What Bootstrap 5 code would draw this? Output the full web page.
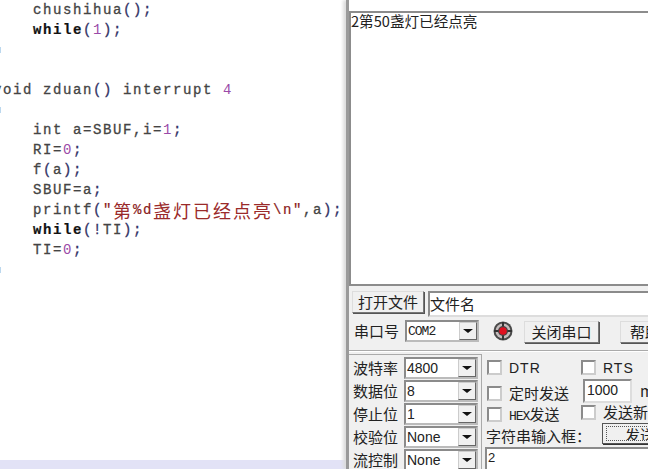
<!DOCTYPE html>
<html lang="zh">
<head>
<meta charset="utf-8">
<title>串口调试</title>
<link href="https://cdn.jsdelivr.net/npm/bootstrap@5.3.0/dist/css/bootstrap.min.css" rel="stylesheet">
<style>
html,body{margin:0;height:469px;width:648px;overflow:hidden;background:#fff}
.shot{width:648px;height:469px;overflow:hidden;font-family:"Noto Sans CJK SC","Liberation Sans",sans-serif;color:#222}
.editor{width:346px;flex:none;overflow:hidden}
.code{flex:1;font:14px/20px "Liberation Mono",monospace;letter-spacing:1.6px;color:#444;-webkit-text-stroke:.3px #444;white-space:pre;margin:0 0 0 -7px}
.code b{color:#111;-webkit-text-stroke:.2px #111}
.code .pn{color:#336;-webkit-text-stroke:.3px #336}
.code .nm{color:#9a4aa8;-webkit-text-stroke:0}
.code .st{color:#8a2020;-webkit-text-stroke:.2px #8a2020}
.code .cj{font:18px/20px "Noto Sans CJK SC",sans-serif;letter-spacing:2px;color:#9a2a2a;-webkit-text-stroke:0;vertical-align:top}
.mk{display:inline-block;width:1px;height:6px;background:#bcd8ee;margin-left:7px;vertical-align:middle}
.strip{height:9px;background:#e2e2f6;flex:none}
.tool{width:302px;flex:none;background:#f0f0f0;border-left:3px solid #9a9a9a;box-shadow:-3px 0 3px #ddd;position:relative}
.topgap{height:11px;background:#fff;flex:none}
.output{height:275px;flex:none;background:#fff;border:2px solid #8c8c8c;border-right:0;font-size:14.6px;line-height:15px;color:#222;white-space:nowrap}
.bar{font-size:15px;line-height:20px;white-space:nowrap}
.w95btn{background:#f0f0f0;border:1px solid #777;border-top-color:#ddd;border-left-color:#ddd;box-shadow:1px 1px 0 #555;display:flex;align-items:center;justify-content:center;flex:none}
.fileline{height:35px;padding:5px 0 0 3px;gap:4px}
.fileline .w95btn{width:72px;height:22px}
.sunk{background:#fff;border:2px solid #8b8b8b;border-right-color:#ddd;border-bottom-color:#ddd;flex:none}
.fname{flex:1;height:26px;margin-right:-4px;line-height:21px}
.portline{height:27px;padding:0 0 5px 5px;margin-top:-1px}
.lbl{width:44px;flex:none}
.combo{width:74px;height:22px;display:flex;align-items:center;font:14px/18px "Liberation Sans",sans-serif;padding-left:1px;margin-left:7px;background:#fff;border:2px solid #8b8b8b;border-right-color:#bbb;border-bottom-color:#bbb;flex:none;position:relative}
.combo i{position:absolute;right:0;top:0;bottom:0;width:18px;background:#f0f0f0;border:1px solid #ccc;border-right-color:#666;border-bottom-color:#666;display:flex;align-items:center;justify-content:center}
.combo i::after{content:"";border:5px solid transparent;border-top:4px solid #111;border-bottom:0}
.narrow{font:13px "Liberation Mono",monospace;letter-spacing:-1px}
.led{width:20px;height:20px;margin-left:14px;flex:none}
.closebtn{width:75px;height:22px;margin-left:11px;margin-top:1px}
.helpbtn{width:60px;height:22px;margin-left:21px;margin-top:1px;justify-content:flex-start;padding-left:9px}
.rule{height:2px;background:#aaa;border-bottom:1px solid #fff;margin-top:3px;flex:none}
.lower{flex:1;min-height:0}
.params{width:133px;flex:none;border:1px solid #aaa;border-bottom:0;border-left:0;padding:1px 0 0 4px;margin-top:2px}
.prow{height:23px}
.sends{flex:1;padding:4px 0 0 4px;min-width:0}
.srow{height:23px;font-size:15px}
.short{height:22px}
.chk{width:15px;height:15px;background:#fff;border:2px solid #8b8b8b;border-right-color:#ccc;border-bottom-color:#ccc;flex:none}
.c1{width:95px;flex:none;padding-left:1px}
.c1 .chk{margin-right:7px}
.lat{font:14px "Liberation Sans",sans-serif;letter-spacing:1px}
.c2 .chk{margin-right:7px}
.down{margin-top:5px}
.downb{margin-top:1px}
.up{margin-top:-3px}
.num{width:49px;height:24px;font:14px/19px "Liberation Sans",sans-serif;padding-left:2px;margin:0 8px 0 2px}
.lbltxt{margin-top:0}
.sendbtn{width:60px;height:21px;margin:-5px 0 0 11px;justify-content:flex-start;padding-left:3px;font-size:15px;border-color:#555;box-shadow:1px 1px 0 #333}
.dots{border:1px dotted #555;padding:0 0 0 18px;line-height:15px;height:15px;width:100%;overflow:hidden}
.typed{height:24px;margin-left:-1px;font:13px/17px "Liberation Sans",sans-serif;padding-left:1px;width:170px}
</style>
</head>
<body>
<div class="shot d-flex">
  <div class="editor d-flex flex-column">
<div class="code">    chushihua<span class="pn">();</span>
    <b>while</b><span class="pn">(</span><span class="nm">1</span><span class="pn">);</span>
<span class="mk"></span>

void zduan<span class="pn">()</span> interrupt <span class="nm">4</span>
<span class="mk"></span>
    int a=SBUF,i=<span class="nm">1</span><span class="pn">;</span>
    RI=<span class="nm">0</span><span class="pn">;</span>
    f<span class="pn">(</span>a<span class="pn">);</span>
    SBUF=a<span class="pn">;</span>
    printf<span class="pn">(</span><span class="st">"<span class="cj">第</span>%d<span class="cj">盏灯已经点亮</span>\n"</span>,a<span class="pn">);</span>
    <b>while</b><span class="pn">(!</span>TI<span class="pn">);</span>
    TI=<span class="nm">0</span><span class="pn">;</span>
<span class="mk"></span></div>
    <div class="strip"></div>
  </div>
  <div class="tool d-flex flex-column">
    <div class="topgap"></div>
    <div class="output">2第50盏灯已经点亮</div>
    <div class="bar d-flex fileline">
      <div class="w95btn">打开文件</div>
      <div class="sunk fname">文件名</div>
    </div>
    <div class="bar d-flex align-items-center portline">
      <span class="lbl">串口号</span>
      <div class="combo"><span class="narrow">COM2</span><i></i></div>
      <svg class="led" viewBox="0 0 20 20"><circle cx="10" cy="10" r="9.5" fill="#4a4a4a"/><circle cx="10" cy="10" r="7.5" fill="#c4bcbc"/><path d="M10 1v18M1 10h18" stroke="#333" stroke-width="2"/><circle cx="10" cy="10" r="5" fill="#444"/><circle cx="10" cy="10" r="3.8" fill="#e01020"/></svg>
      <div class="w95btn closebtn">关闭串口</div>
      <div class="w95btn helpbtn">帮助</div>
    </div>
    <div class="rule"></div>
    <div class="lower d-flex">
      <div class="params bar">
        <div class="prow d-flex align-items-center"><span class="lbl">波特率</span><div class="combo">4800<i></i></div></div>
        <div class="prow d-flex align-items-center"><span class="lbl">数据位</span><div class="combo">8<i></i></div></div>
        <div class="prow d-flex align-items-center"><span class="lbl">停止位</span><div class="combo">1<i></i></div></div>
        <div class="prow d-flex align-items-center"><span class="lbl">校验位</span><div class="combo">None<i></i></div></div>
        <div class="prow d-flex align-items-center"><span class="lbl">流控制</span><div class="combo">None<i></i></div></div>
      </div>
      <div class="sends bar">
        <div class="srow d-flex align-items-center"><div class="c1 d-flex align-items-center"><span class="chk"></span><span class="lat">DTR</span></div><div class="c2 d-flex align-items-center"><span class="chk"></span><span class="lat">RTS</span></div></div>
        <div class="srow d-flex align-items-center"><div class="c1 d-flex align-items-center down"><span class="chk"></span>定时发送</div><div class="sunk num">1000</div><span>ms</span></div>
        <div class="srow d-flex align-items-center"><div class="c1 d-flex align-items-center downb"><span class="chk"></span><span><span class="narrow">HEX</span>发送</span></div><div class="c2 d-flex align-items-center up"><span class="chk"></span>发送新行</div></div>
        <div class="srow short d-flex align-items-center"><span class="lbltxt">字符串输入框：</span><div class="w95btn sendbtn"><span class="dots">发送</span></div></div>
        <div class="sunk typed">2</div>
      </div>
    </div>
  </div>
</div>
<script src="https://cdn.jsdelivr.net/npm/bootstrap@5.3.0/dist/js/bootstrap.bundle.min.js"></script>
</body>
</html>
